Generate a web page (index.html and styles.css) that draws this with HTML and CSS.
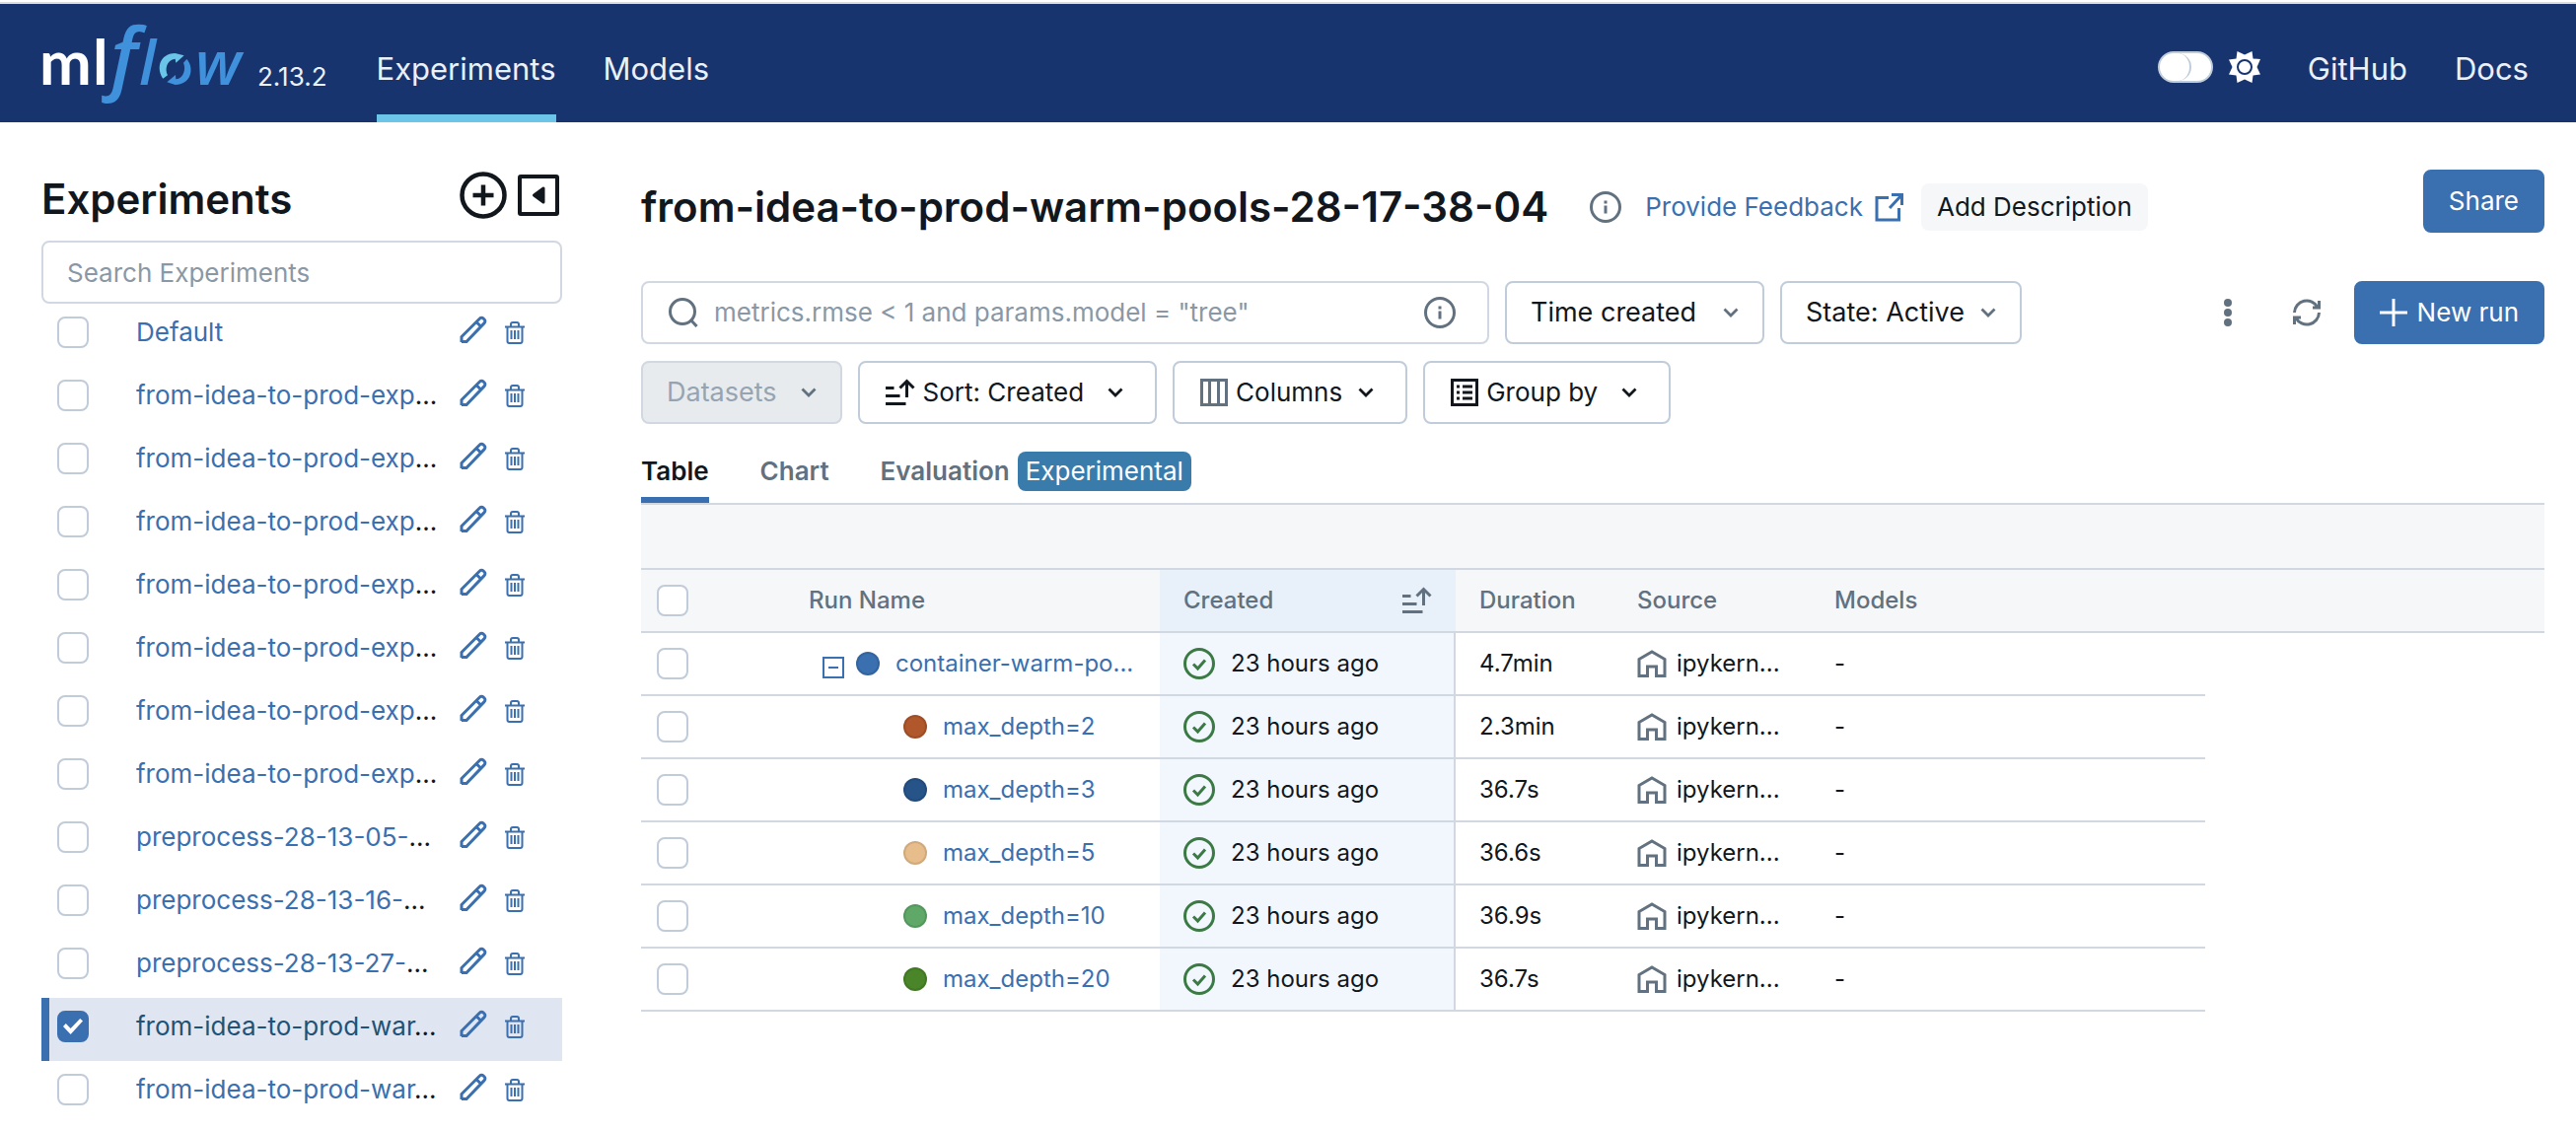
FILE: index.html
```html
<!DOCTYPE html>
<html lang="en">
<head>
<meta charset="utf-8">
<title>from-idea-to-prod-warm-pools-28-17-38-04 - MLflow</title>
<link rel="stylesheet" href="styles.css">
</head>
<body>
<svg class="sprite" aria-hidden="true">
  <symbol id="pencil" viewBox="0 0 28 34"><path d="M2 27v-5.500L20.500 3a2.500 2.500 0 0 1 3.600 0l1 1a2.500 2.500 0 0 1 0 3.600L7 26.500H2ZM17 6.500l4.500 4.500" fill="none" stroke="currentColor" stroke-width="3"/></symbol>
  <symbol id="trash" viewBox="0 0 20 23"><path d="M0 5.500h20M2.500 5.500v14.500a2 2 0 0 0 2 2h11a2 2 0 0 0 2-2V5.500M6 5V3a2 2 0 0 1 2-2h4a2 2 0 0 1 2 2v2M6.500 9v9M10 9v9M13.500 9v9" fill="none" stroke="currentColor" stroke-width="2"/></symbol>
  <symbol id="info" viewBox="0 0 32 32"><circle cx="16" cy="16" r="14.500" fill="none" stroke="currentColor" stroke-width="3"/><path d="M14.500 14.500h3v8h-3zM14.500 9.500h3v3h-3z" fill="currentColor"/></symbol>
  <symbol id="chevron" viewBox="0 0 16 10"><path d="m1.500 1.500 6.500 6.500 6.500-6.500" fill="none" stroke="currentColor" stroke-width="2.800"/></symbol>
  <symbol id="sort" viewBox="0 0 30 28"><path d="M0 9.500h8.500M0 17.500h14.500M0 25.500h20.500M21.500 19V3M14.500 9.500l7-7 7 7" fill="none" stroke="currentColor" stroke-width="3"/></symbol>
  <symbol id="ok" viewBox="0 0 32 32"><circle cx="16" cy="16" r="14.500" fill="none" stroke="currentColor" stroke-width="3"/><path d="m10 16.500 4.500 4.500 7.500-8.500" fill="none" stroke="currentColor" stroke-width="3"/></symbol>
  <symbol id="home" viewBox="0 0 30 28"><path d="M2 26.500V9.500l13-7.500 13 7.500v17h-8.500V17h-9v9.500Z" fill="none" stroke="currentColor" stroke-width="3"/></symbol>
</svg>

<header class="topbar">
  <a class="brand" href="#" aria-label="MLflow 2.13.2">
    <svg class="logo" viewBox="0 0 208 80" role="img" aria-label="mlflow">
      <text class="logo-ml" x="-2" y="62">m</text>
      <text class="logo-ml" x="52" y="62">l</text>
      <text class="logo-f" x="70" y="62">f</text>
      <text class="logo-lw" x="99" y="62">l</text>
      <g transform="translate(-6 -10) scale(.3333)">
        <path fill="#6bc5e8" d="M388 197C368 170 374 121 425 120L452 127 427 149 425 137C398 140 393 170 402 187Z"/>
        <path fill="#4091dc" d="M460 138C482 160 478 215 425 216L400 208 426 186 427 199C452 197 458 165 450 149Z"/>
      </g>
      <text class="logo-lw" x="156" y="62">w</text>
    </svg>
    <span class="version">2.13.2</span>
  </a>
  <nav class="nav">
    <a class="nav-link active" href="#">Experiments</a>
    <a class="nav-link" href="#">Models</a>
  </nav>
  <div class="nav nav-end">
    <label class="theme">
      <input class="switch" type="checkbox" role="switch" aria-label="Dark mode">
      <svg width="32" height="32" viewBox="0 0 32 32"><path fill="#fff" d="m16 3.500 7.500-3.500 1 7.500 7.500.500-3.500 8 3.500 7.500-7.500 1-1 7.500-7.500-3.500L8.500 32l-1-7.500L0 23.500 3.500 16 0 8.500l7.500-1 1-7.500Z"/><circle cx="16" cy="16" r="7" fill="#fff" stroke="#18346f" stroke-width="2"/></svg>
    </label>
    <a class="nav-link" href="#">GitHub</a>
    <a class="nav-link" href="#">Docs</a>
  </div>
</header>

<div class="page">
  <aside class="sidebar">
    <div class="sidebar-head">
      <h2 class="heading">Experiments</h2>
      <div class="sidebar-actions">
        <button class="icon-btn" aria-label="New experiment"><svg width="48" height="48" viewBox="0 0 48 48" fill="none" stroke="currentColor"><circle cx="24" cy="24" r="21.500" stroke-width="4.500"/><path d="M24 13.500v21M13.500 24h21" stroke-width="4.500"/></svg></button>
        <button class="icon-btn" aria-label="Hide experiment list"><svg width="42" height="42" viewBox="0 0 42 42"><rect x="2" y="2" width="38" height="38" rx="1" fill="none" stroke="currentColor" stroke-width="4"/><path d="M26 14v14L16.500 21Z" fill="currentColor" stroke="currentColor" stroke-width="3" stroke-linejoin="round"/></svg></button>
      </div>
    </div>
    <input class="search-exp" type="text" placeholder="Search Experiments" aria-label="Search Experiments">
    <ul class="exp-list">
      <li class="exp"><input class="check" type="checkbox" aria-label="Select Default"><span class="exp-name"><a href="#">Default</a></span><button class="icon-btn" aria-label="Rename"><svg width="28" height="34"><use href="#pencil"/></svg></button><button class="icon-btn" aria-label="Delete"><svg width="20" height="23"><use href="#trash"/></svg></button></li>
      <li class="exp"><input class="check" type="checkbox" aria-label="Select experiment"><span class="exp-name"><a href="#">from-idea-to-prod-exp</a>...</span><button class="icon-btn" aria-label="Rename"><svg width="28" height="34"><use href="#pencil"/></svg></button><button class="icon-btn" aria-label="Delete"><svg width="20" height="23"><use href="#trash"/></svg></button></li>
      <li class="exp"><input class="check" type="checkbox" aria-label="Select experiment"><span class="exp-name"><a href="#">from-idea-to-prod-exp</a>...</span><button class="icon-btn" aria-label="Rename"><svg width="28" height="34"><use href="#pencil"/></svg></button><button class="icon-btn" aria-label="Delete"><svg width="20" height="23"><use href="#trash"/></svg></button></li>
      <li class="exp"><input class="check" type="checkbox" aria-label="Select experiment"><span class="exp-name"><a href="#">from-idea-to-prod-exp</a>...</span><button class="icon-btn" aria-label="Rename"><svg width="28" height="34"><use href="#pencil"/></svg></button><button class="icon-btn" aria-label="Delete"><svg width="20" height="23"><use href="#trash"/></svg></button></li>
      <li class="exp"><input class="check" type="checkbox" aria-label="Select experiment"><span class="exp-name"><a href="#">from-idea-to-prod-exp</a>...</span><button class="icon-btn" aria-label="Rename"><svg width="28" height="34"><use href="#pencil"/></svg></button><button class="icon-btn" aria-label="Delete"><svg width="20" height="23"><use href="#trash"/></svg></button></li>
      <li class="exp"><input class="check" type="checkbox" aria-label="Select experiment"><span class="exp-name"><a href="#">from-idea-to-prod-exp</a>...</span><button class="icon-btn" aria-label="Rename"><svg width="28" height="34"><use href="#pencil"/></svg></button><button class="icon-btn" aria-label="Delete"><svg width="20" height="23"><use href="#trash"/></svg></button></li>
      <li class="exp"><input class="check" type="checkbox" aria-label="Select experiment"><span class="exp-name"><a href="#">from-idea-to-prod-exp</a>...</span><button class="icon-btn" aria-label="Rename"><svg width="28" height="34"><use href="#pencil"/></svg></button><button class="icon-btn" aria-label="Delete"><svg width="20" height="23"><use href="#trash"/></svg></button></li>
      <li class="exp"><input class="check" type="checkbox" aria-label="Select experiment"><span class="exp-name"><a href="#">from-idea-to-prod-exp</a>...</span><button class="icon-btn" aria-label="Rename"><svg width="28" height="34"><use href="#pencil"/></svg></button><button class="icon-btn" aria-label="Delete"><svg width="20" height="23"><use href="#trash"/></svg></button></li>
      <li class="exp"><input class="check" type="checkbox" aria-label="Select experiment"><span class="exp-name"><a href="#">preprocess-28-13-05-</a>...</span><button class="icon-btn" aria-label="Rename"><svg width="28" height="34"><use href="#pencil"/></svg></button><button class="icon-btn" aria-label="Delete"><svg width="20" height="23"><use href="#trash"/></svg></button></li>
      <li class="exp"><input class="check" type="checkbox" aria-label="Select experiment"><span class="exp-name"><a href="#">preprocess-28-13-16-</a>...</span><button class="icon-btn" aria-label="Rename"><svg width="28" height="34"><use href="#pencil"/></svg></button><button class="icon-btn" aria-label="Delete"><svg width="20" height="23"><use href="#trash"/></svg></button></li>
      <li class="exp"><input class="check" type="checkbox" aria-label="Select experiment"><span class="exp-name"><a href="#">preprocess-28-13-27-</a>...</span><button class="icon-btn" aria-label="Rename"><svg width="28" height="34"><use href="#pencil"/></svg></button><button class="icon-btn" aria-label="Delete"><svg width="20" height="23"><use href="#trash"/></svg></button></li>
      <li class="exp selected"><input class="check" type="checkbox" checked aria-label="Select experiment"><span class="exp-name"><a href="#">from-idea-to-prod-war</a>...</span><button class="icon-btn" aria-label="Rename"><svg width="28" height="34"><use href="#pencil"/></svg></button><button class="icon-btn" aria-label="Delete"><svg width="20" height="23"><use href="#trash"/></svg></button></li>
      <li class="exp"><input class="check" type="checkbox" aria-label="Select experiment"><span class="exp-name"><a href="#">from-idea-to-prod-war</a>...</span><button class="icon-btn" aria-label="Rename"><svg width="28" height="34"><use href="#pencil"/></svg></button><button class="icon-btn" aria-label="Delete"><svg width="20" height="23"><use href="#trash"/></svg></button></li>
    </ul>
  </aside>

  <main class="main">
    <div class="title-row">
      <div class="title-group">
        <h1 class="heading">from-idea-to-prod-warm-pools-28-17-38-04</h1>
        <button class="icon-btn muted title-info" aria-label="Experiment info"><svg width="32" height="32"><use href="#info"/></svg></button>
        <a class="feedback" href="#">Provide Feedback<svg width="29" height="29" viewBox="0 0 29 29"><path d="M14 4.500H2v22.500h22.500V15M17 1.500h10.500V12M27 2 15 15" fill="none" stroke="currentColor" stroke-width="3"/></svg></a>
        <button class="add-desc">Add Description</button>
      </div>
      <button class="btn primary">Share</button>
    </div>

    <div class="toolbar">
      <div class="tools">
        <div class="search-runs">
          <svg class="muted" width="30" height="30" viewBox="0 0 30 30" fill="none" stroke="currentColor" stroke-width="3"><circle cx="14" cy="14" r="12.500"/><path d="m22 22 6.500 7"/></svg>
          <input type="text" placeholder='metrics.rmse &lt; 1 and params.model = "tree"' aria-label="Search runs">
          <button class="icon-btn muted" aria-label="Search syntax help"><svg width="32" height="32"><use href="#info"/></svg></button>
        </div>
        <div class="select"><select class="wide" aria-label="Time created"><option>Time created</option></select><svg class="muted" width="16" height="10"><use href="#chevron"/></svg></div>
        <div class="select"><select aria-label="State"><option>State: Active</option></select><svg class="muted" width="16" height="10"><use href="#chevron"/></svg></div>
        <div class="tools-end">
          <button class="icon-btn muted" aria-label="More actions"><svg width="8" height="28" viewBox="0 0 8 28" fill="currentColor"><circle cx="4" cy="4" r="4"/><circle cx="4" cy="14" r="4"/><circle cx="4" cy="24" r="4"/></svg></button>
          <button class="icon-btn muted refresh" aria-label="Refresh"><svg width="28" height="28" viewBox="0 0 28 28" fill="none" stroke="currentColor" stroke-width="3"><path d="M1.500 14A12.500 12.500 0 0 1 25 8.500M26.500 2v7H20M26.500 14A12.500 12.500 0 0 1 3 19.500M1.500 26v-7H8"/></svg></button>
          <button class="btn primary new-run"><svg width="28" height="28" viewBox="0 0 28 28"><path d="M14 0v28M0 14h28" stroke="currentColor" stroke-width="3"/></svg>New run</button>
        </div>
      </div>
      <div class="tools">
        <button class="btn" disabled>Datasets<svg class="caret muted" width="16" height="10"><use href="#chevron"/></svg></button>
        <button class="btn"><svg width="30" height="28"><use href="#sort"/></svg>Sort: Created<svg class="caret" width="16" height="10"><use href="#chevron"/></svg></button>
        <button class="btn"><svg class="muted" width="28" height="28" viewBox="0 0 28 28" fill="none" stroke="currentColor" stroke-width="3"><path d="M1.500 1.500h25v25h-25ZM9.500 1v26M18.500 1v26"/></svg>Columns<svg class="caret near" width="16" height="10"><use href="#chevron"/></svg></button>
        <button class="btn"><svg width="28" height="28" viewBox="0 0 28 28" fill="none" stroke="currentColor" stroke-width="3"><path d="M1.500 1.500h25v25h-25ZM6 8h3M12 8h10M6 14h3M12 14h10M6 20h3M12 20h10"/></svg>Group by<svg class="caret" width="16" height="10"><use href="#chevron"/></svg></button>
      </div>
    </div>

    <div class="tabs" role="tablist">
      <button class="tab active" role="tab" aria-selected="true">Table</button>
      <button class="tab" role="tab">Chart</button>
      <button class="tab" role="tab">Evaluation<span class="badge">Experimental</span></button>
    </div>

    <div class="band"></div>
    <table class="runs">
      <colgroup><col class="c-check"><col class="c-name"><col class="c-created"><col class="c-duration"><col class="c-source"><col class="c-models"><col></colgroup>
      <thead>
        <tr><th class="pick"><input class="check" type="checkbox" aria-label="Select all runs"></th><th class="name">Run Name</th><th class="created"><div class="sorted">Created<svg width="30" height="28"><use href="#sort"/></svg></div></th><th>Duration</th><th>Source</th><th>Models</th><th></th></tr>
      </thead>
      <tbody>
        <tr><td class="pick"><input class="check" type="checkbox" aria-label="Select run"></td><td><div class="run"><button class="icon-btn" aria-label="Collapse"><svg width="22" height="30" viewBox="0 0 22 30"><path d="M1 9h20v20H1ZM6 19h10" fill="none" stroke="currentColor" stroke-width="2"/></svg></button><span class="dot blue"></span><a href="#">container-warm-po...</a></div></td><td class="created"><div class="cell status"><svg width="32" height="32"><use href="#ok"/></svg><span>23 hours ago</span></div></td><td>4.7min</td><td><div class="cell source"><svg width="30" height="28"><use href="#home"/></svg><span>ipykern...</span></div></td><td>-</td><td></td></tr>
        <tr><td class="pick"><input class="check" type="checkbox" aria-label="Select run"></td><td><div class="run child"><span class="dot rust"></span><a href="#">max_depth=2</a></div></td><td class="created"><div class="cell status"><svg width="32" height="32"><use href="#ok"/></svg><span>23 hours ago</span></div></td><td>2.3min</td><td><div class="cell source"><svg width="30" height="28"><use href="#home"/></svg><span>ipykern...</span></div></td><td>-</td><td></td></tr>
        <tr><td class="pick"><input class="check" type="checkbox" aria-label="Select run"></td><td><div class="run child"><span class="dot navy"></span><a href="#">max_depth=3</a></div></td><td class="created"><div class="cell status"><svg width="32" height="32"><use href="#ok"/></svg><span>23 hours ago</span></div></td><td>36.7s</td><td><div class="cell source"><svg width="30" height="28"><use href="#home"/></svg><span>ipykern...</span></div></td><td>-</td><td></td></tr>
        <tr><td class="pick"><input class="check" type="checkbox" aria-label="Select run"></td><td><div class="run child"><span class="dot sand"></span><a href="#">max_depth=5</a></div></td><td class="created"><div class="cell status"><svg width="32" height="32"><use href="#ok"/></svg><span>23 hours ago</span></div></td><td>36.6s</td><td><div class="cell source"><svg width="30" height="28"><use href="#home"/></svg><span>ipykern...</span></div></td><td>-</td><td></td></tr>
        <tr><td class="pick"><input class="check" type="checkbox" aria-label="Select run"></td><td><div class="run child"><span class="dot mint"></span><a href="#">max_depth=10</a></div></td><td class="created"><div class="cell status"><svg width="32" height="32"><use href="#ok"/></svg><span>23 hours ago</span></div></td><td>36.9s</td><td><div class="cell source"><svg width="30" height="28"><use href="#home"/></svg><span>ipykern...</span></div></td><td>-</td><td></td></tr>
        <tr><td class="pick"><input class="check" type="checkbox" aria-label="Select run"></td><td><div class="run child"><span class="dot green"></span><a href="#">max_depth=20</a></div></td><td class="created"><div class="cell status"><svg width="32" height="32"><use href="#ok"/></svg><span>23 hours ago</span></div></td><td>36.7s</td><td><div class="cell source"><svg width="30" height="28"><use href="#home"/></svg><span>ipykern...</span></div></td><td>-</td><td></td></tr>
      </tbody>
    </table>
  </main>
</div>
</body>
</html>
```
FILE: styles.css
```css
:root {
  --navy: #18346f;
  --blue: #3a6fb0;
  --text: #11171c;
  --muted: #62717f;
  --placeholder: #8a98a6;
  --line: #d1d8e1;
  --control: #c0ccd9;
  --panel: #f5f7f9;
}

* { box-sizing: border-box; }

body {
  margin: 0;
  background: #fff;
  color: var(--text);
  font: 26px/40px Inter, "Liberation Sans", sans-serif;
}

a { color: var(--blue); text-decoration: none; }
button, input, select { font: inherit; color: inherit; margin: 0; }
svg { display: block; flex: none; }
.sprite { position: absolute; width: 0; height: 0; }
.muted { color: var(--muted); }
.icon-btn { display: flex; flex: none; padding: 0; border: 0; background: none; }
.heading { margin: 0; font-size: 42px; line-height: 56px; font-weight: 600; white-space: nowrap; }

/* Top bar */
.topbar {
  display: flex;
  margin-top: 2px;
  padding: 0 48px 0 42px;
  border-top: 2px solid #ddd;
  background: var(--navy);
}
.brand { display: flex; align-items: flex-end; gap: 11px; padding-bottom: 20px; color: #eaf1fb; }
.logo { width: 208px; height: 80px; overflow: visible; }
.logo-ml { font: 700 63px Lato, sans-serif; fill: #fff; }
.logo-f { font: italic 600 80px "Open Sans", sans-serif; fill: #4091dc; }
.logo-lw { font: italic 600 62px "Open Sans", sans-serif; fill: #4091dc; }
.version { padding-bottom: 10px; line-height: 32px; }
.nav { display: flex; gap: 48px; margin-left: 50px; }
.nav-end { margin-left: auto; }
.nav-link {
  display: flex;
  align-items: center;
  height: 120px;
  padding-top: 20px;
  border-bottom: 8px solid transparent;
  color: #e9f1fc;
  font-size: 31px;
}
.nav-link.active { border-color: #6bc5e8; }
.theme { display: flex; align-items: center; gap: 16px; padding-top: 8px; }
.switch {
  appearance: none;
  width: 56px;
  height: 32px;
  border: 2px solid var(--control);
  border-radius: 16px;
  background: #fff;
}
.switch::before {
  content: "";
  display: block;
  width: 30px;
  height: 28px;
  border-right: 2px solid var(--control);
  border-radius: 14px;
}

/* Page columns */
.page { display: flex; gap: 80px; padding: 0 32px 0 42px; }
.sidebar { flex: 0 0 528px; padding-top: 50px; }
.main { flex: 1; min-width: 0; padding-top: 48px; }

/* Checkboxes */
.check {
  appearance: none;
  display: grid;
  place-items: center;
  flex: none;
  width: 32px;
  height: 32px;
  border: 2px solid var(--control);
  border-radius: 8px;
  background: #fff;
}
.check:checked { border-color: var(--blue); background: var(--blue); }
.check:checked::before {
  content: "";
  width: 20px;
  height: 16px;
  background: #fff;
  clip-path: polygon(0 50%, 14% 32%, 38% 62%, 86% 0, 100% 16%, 38% 100%);
}

/* Experiment list */
.sidebar-head { display: flex; justify-content: space-between; margin-bottom: 12px; }
.sidebar-actions { display: flex; align-items: center; gap: 11px; padding: 0 3px 10px 0; }
.search-exp {
  width: 100%;
  height: 64px;
  padding: 0 24px;
  border: 2px solid var(--line);
  border-radius: 8px;
}
::placeholder { color: var(--placeholder); opacity: 1; }
.exp-list { margin: 0; padding: 0; list-style: none; }
.exp {
  display: flex;
  align-items: center;
  height: 64px;
  padding: 0 38px 6px 8px;
  border-left: 8px solid transparent;
}
.exp.selected { border-color: var(--blue); background: #dfe6f2; }
.exp.selected a { color: #1f5276; }
.exp-name { flex: 1; padding-left: 48px; white-space: nowrap; overflow: hidden; }
.exp .icon-btn { margin-left: 18px; color: var(--blue); }

/* Title */
.title-row { display: flex; justify-content: space-between; align-items: flex-start; margin-bottom: 39px; }
.title-group { display: flex; align-items: center; height: 76px; margin-bottom: -2px; }
.title-info { margin-left: 42px; }
.feedback { display: flex; align-items: center; gap: 12px; margin-left: 24px; white-space: nowrap; }
.add-desc { height: 48px; margin-left: 18px; padding: 0 16px; border: 0; border-radius: 8px; background: var(--panel); white-space: nowrap; }

/* Toolbar */
.toolbar { display: grid; gap: 17px; }
.tools { display: flex; gap: 16px; }
.btn {
  display: flex;
  align-items: center;
  gap: 8px;
  height: 64px;
  padding: 0 32px 0 26px;
  border: 2px solid var(--control);
  border-radius: 8px;
  background: #fff;
  white-space: nowrap;
}
.btn:disabled { padding: 0 24px; border-color: var(--line); background: #e7ebee; color: #96a4b2; font-size: 27px; }
.btn.primary { padding: 0 24px; border-color: var(--blue); background: var(--blue); color: #fff; }
.caret { margin-left: 16px; }
.caret.near { margin-left: 8px; }
.search-runs {
  display: flex;
  align-items: center;
  flex: 0 1 860px;
  height: 64px;
  padding: 0 32px 0 26px;
  border: 2px solid var(--line);
  border-radius: 8px;
}
.search-runs input { flex: 1; min-width: 0; padding: 0 16px; border: 0; outline: 0; background: none; }
.select { display: grid; align-items: center; }
.select > * { grid-area: 1 / 1; }
.select svg { justify-self: end; margin-right: 26px; pointer-events: none; }
.select select {
  appearance: none;
  height: 64px;
  padding: 0 56px 0 24px;
  border: 2px solid var(--control);
  border-radius: 8px;
  background: #fff;
  font-size: 27px;
}
.select select.wide { padding-right: 66px; }
.tools-end { display: flex; align-items: center; margin-left: auto; }
.refresh { margin: 0 34px 0 62px; }
.new-run { gap: 10px; }

/* Tabs */
.tabs { display: flex; gap: 52px; margin-top: 28px; border-bottom: 2px solid var(--line); }
.tab {
  display: flex;
  gap: 8px;
  padding: 0 0 6px;
  border: 0;
  border-bottom: 6px solid transparent;
  background: none;
  color: var(--muted);
  font-weight: 600;
}
.tab.active { border-color: var(--blue); color: var(--text); }
.badge { padding: 0 8px; border-radius: 8px; background: #397cab; color: #fff; font-weight: 400; }

/* Runs table */
.band { height: 66px; border-bottom: 2px solid var(--line); background: var(--panel); }
.runs { width: 100%; table-layout: fixed; border-collapse: separate; border-spacing: 0; font-size: 24px; }
.c-check { width: 160px; }
.c-name { width: 366px; }
.c-created { width: 300px; }
.c-duration { width: 160px; }
.c-source { width: 200px; }
.c-models { width: 400px; }
.runs th, .runs td { height: 64px; padding: 0 0 0 24px; border-bottom: 2px solid var(--line); text-align: left; white-space: nowrap; }
.runs th { background: var(--panel); color: var(--muted); font-weight: 500; }
.runs td:last-child { border-bottom: 0; }
.runs .pick { padding-left: 16px; }
.runs th.name { padding-left: 10px; }
.runs th.created { background: #e8f0f9; }
.runs td.created { border-right: 2px solid var(--line); background: #f2f7fe; }
.sorted { display: flex; justify-content: space-between; align-items: center; padding-right: 24px; }
.cell, .run { display: flex; align-items: center; }
.status { gap: 16px; }
.status svg { color: #3b7a44; }
.source { gap: 10px; }
.source svg { color: var(--muted); }
.run .icon-btn { margin-right: 12px; color: var(--blue); }
.child { padding-left: 82px; }
.dot { width: 24px; height: 24px; margin-right: 16px; border: 2px solid #0000001a; border-radius: 50%; }
.blue { background-color: #3a6fb0; }
.rust { background-color: #b0572c; }
.navy { background-color: #265489; }
.sand { background-color: #e8bd8c; }
.mint { background-color: #5fa868; }
.green { background-color: #4a8529; }
```
